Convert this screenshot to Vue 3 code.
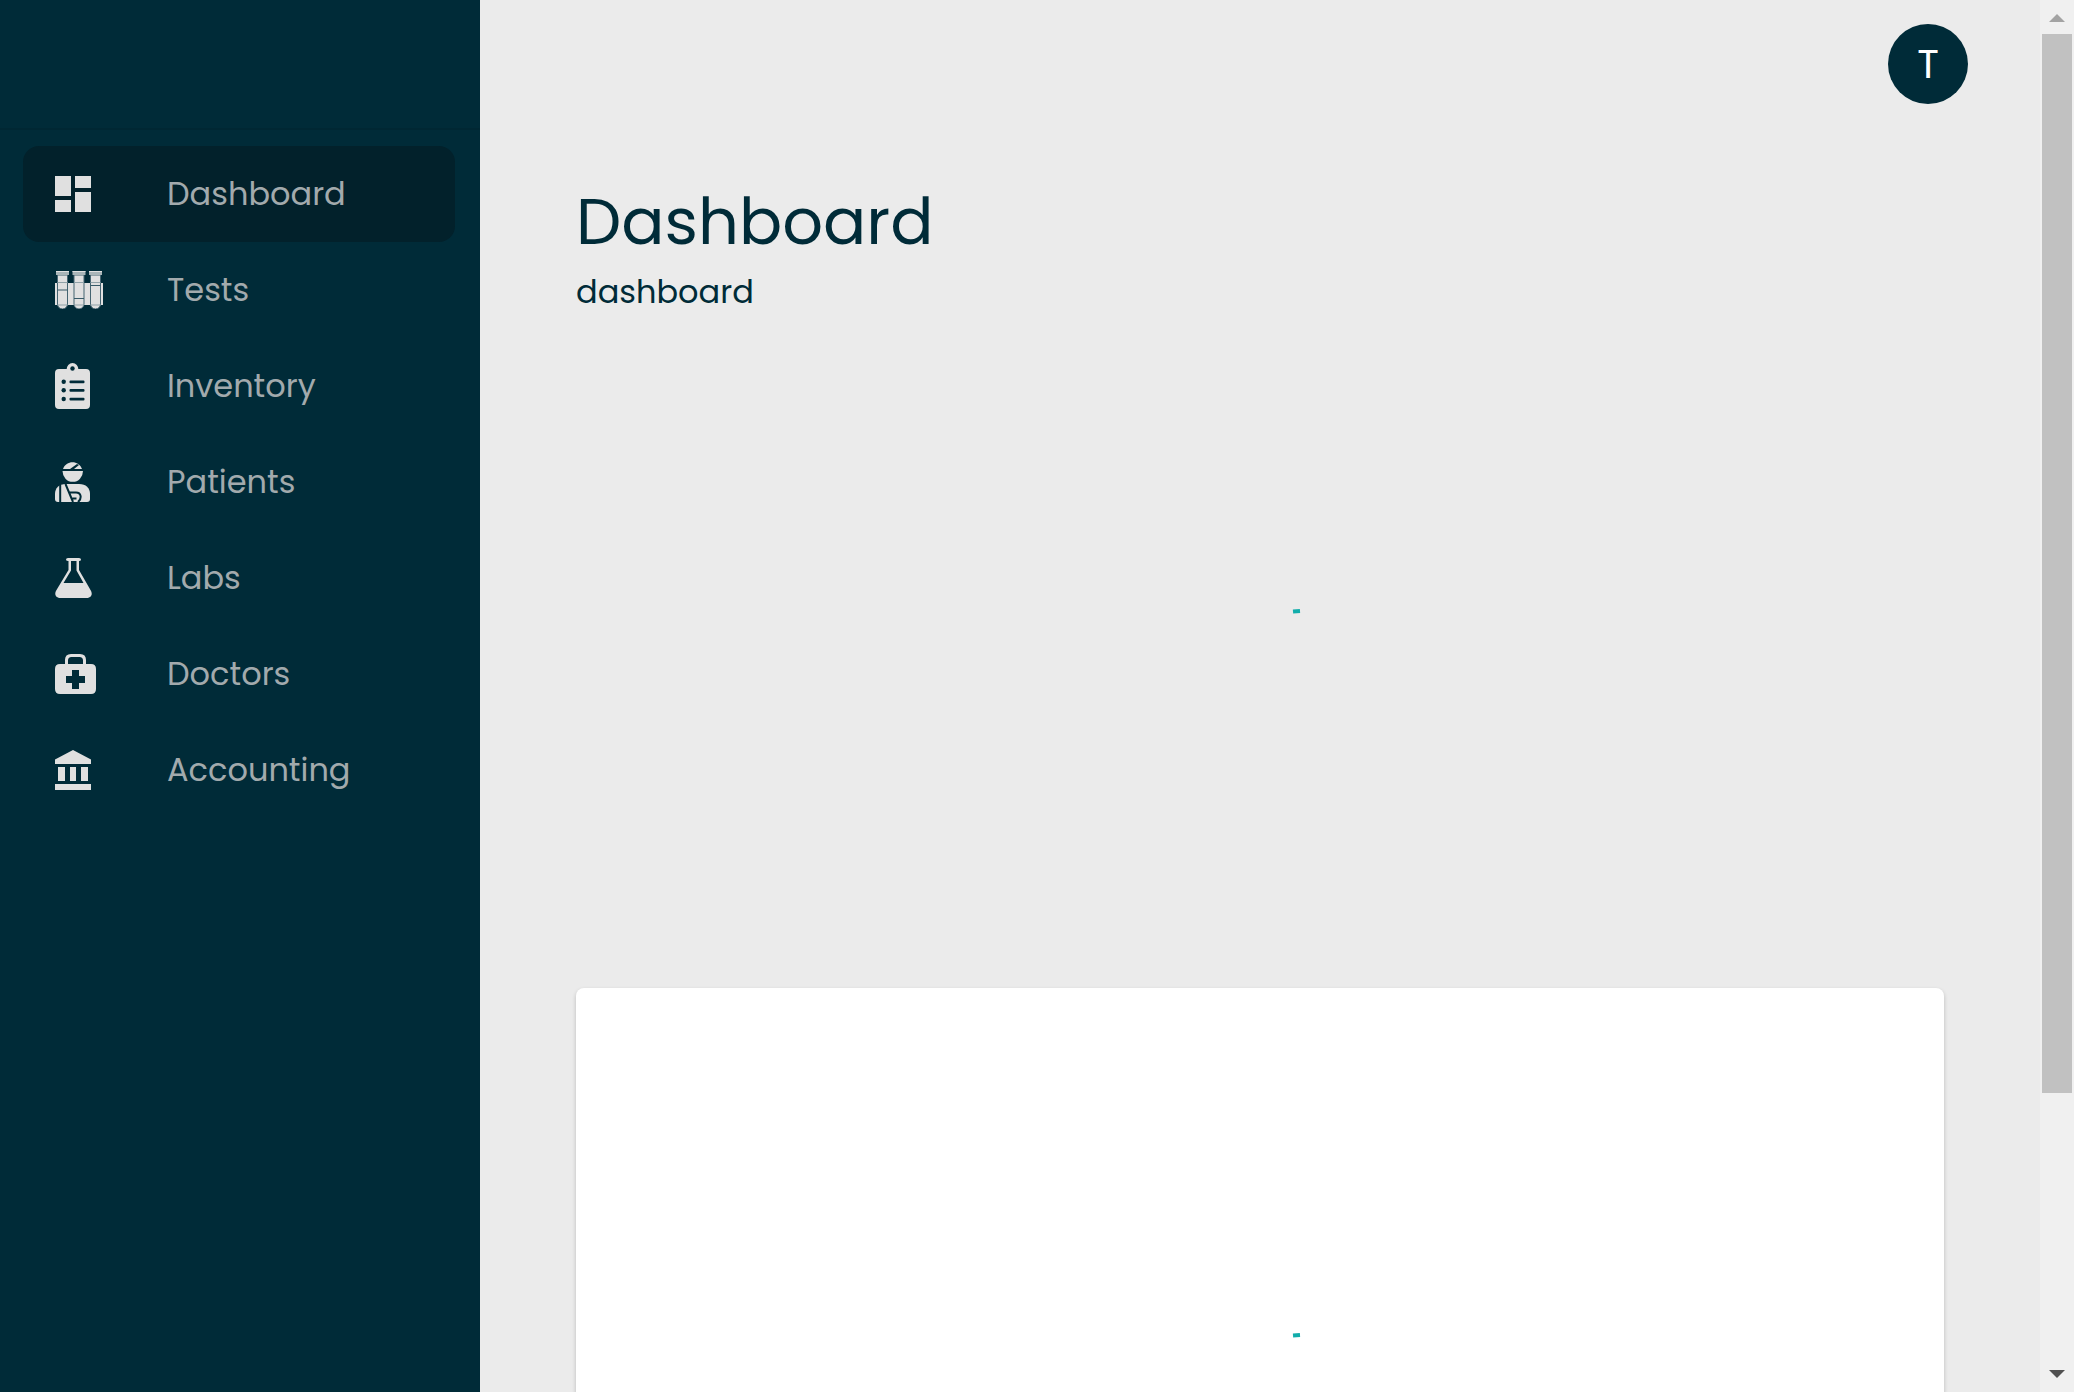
<script setup>
const items = [
  { label: 'Dashboard', icon: 'dashboard', width: 36, height: 36, active: true },
  { label: 'Tests', icon: 'tests', width: 48, height: 38 },
  { label: 'Inventory', icon: 'inventory', width: 35, height: 46 },
  { label: 'Patients', icon: 'patients', width: 35, height: 40 },
  { label: 'Labs', icon: 'labs', width: 37, height: 40 },
  { label: 'Doctors', icon: 'doctors', width: 41, height: 40 },
  { label: 'Accounting', icon: 'accounting', width: 36, height: 40 }
]
</script>

<template>
  <div class="app">
    <aside class="sidebar">
      <div class="brand"></div>
      <nav class="nav">
        <a v-for="item in items" :key="item.label" href="#" class="nav-item" :class="{ active: item.active }">
          <span class="nav-icon">
            <svg :width="item.width" :height="item.height" :viewBox="`0 0 ${item.width} ${item.height}`" fill="currentColor" aria-hidden="true">
              <path v-if="item.icon === 'dashboard'" d="M0 0h16v20H0zM0 24h16v12H0zM20 0h16v12H20zM20 16h16v20H20z" />
              <g v-else-if="item.icon === 'tests'">
                <path d="M0 12h48v22H0z" />
                <g v-for="(x, i) in [7.5, 24, 40.5]" :key="x" :transform="`translate(${x} 0)`">
                  <path d="M-5 4H5v29a5 5 0 0 1-10 0z" stroke="#456471" stroke-width="1" />
                  <path d="M-6.500 0h13v4h-13z" fill="#a9b5b8" />
                  <path d="M-6.500 0h13v1h-13z" />
                  <path d="M-5 11.500H5M-5 34H5" stroke="#91a2a8" stroke-width="1" />
                  <path :d="`M-5 ${[19, 27.5, 14.5][i]}H5`" stroke="#365967" stroke-width="1" />
                </g>
              </g>
              <g v-else-if="item.icon === 'inventory'">
                <path d="M4 6h8a5.700 5.700 0 0 1 11 0h8a4 4 0 0 1 4 4v32a4 4 0 0 1-4 4H4a4 4 0 0 1-4-4V10a4 4 0 0 1 4-4z" />
                <path d="M11.500 7a6 7 0 0 1 12 0z" />
                <g class="cut">
                  <circle cx="17.500" cy="5.500" r="2.200" />
                  <circle cx="8.700" cy="18.700" r="2.200" /><circle cx="8.700" cy="27.300" r="2.200" /><circle cx="8.700" cy="36" r="2.200" />
                  <rect x="14.500" y="17.500" width="15" height="2.700" rx="1" /><rect x="14.500" y="26" width="15" height="2.700" rx="1" /><rect x="14.500" y="34.700" width="15" height="2.700" rx="1" />
                </g>
              </g>
              <g v-else-if="item.icon === 'patients'">
                <path d="M8 7C11-2 24-2 27 7H19l5-4-2-1-7 5z" />
                <path d="M7.500 9h20.500a10.200 10.800 0 0 1-20.500 0z" />
                <path d="M11 22h13c7 0 11 4 11 10v5q0 3-3 3H3q-3 0-3-3v-5c0-6 4-10 11-10z" />
                <path class="cut-line" d="M5.200 23v17M10.500 22l7.500 18M14 30.500h7c5.500 0 6 6 2 9.500M17.500 36.500h4" />
              </g>
              <g v-else-if="item.icon === 'labs'">
                <path d="M13 0h11q2 0 2 1.500T24 3v9l11.500 20c3 5 0 8-4 8h-26c-4 0-7-3-4-8L13.500 12V3Q11 3 11 1.500T13 0zM16 3v9.500L8.500 25h20L21.500 12.500V3z" fill-rule="evenodd" />
              </g>
              <g v-else-if="item.icon === 'doctors'">
                <path d="M5 10h5V6q0-6 6-6h9q6 0 6 6v4h5q5 0 5 5v20q0 5-5 5H5q-5 0-5-5V15q0-5 5-5zm8 0h15V6.500Q28 3 24.500 3h-8Q13 3 13 6.500zM17 16v6h-6v7h6v6h7v-6h6v-7h-6v-6z" fill-rule="evenodd" />
              </g>
              <path v-else d="M18 0l18 9.500V14H0V9.500zM3 17h7v14H3zM15 17h6v14h-6zM26 17h7v14h-7zM0 34h36v6H0z" />
            </svg>
          </span>
          <span>{{ item.label }}</span>
        </a>
      </nav>
    </aside>

    <main class="content">
      <header class="topbar">
        <button class="avatar" type="button">T</button>
      </header>
      <h1>Dashboard</h1>
      <p class="subtitle">dashboard</p>
      <section class="loading">
        <svg class="spinner" viewBox="0 0 80 80" role="progressbar" aria-label="Loading"><path d="M37 3.500L44 3" /></svg>
      </section>
      <section class="card loading">
        <svg class="spinner" viewBox="0 0 80 80" role="progressbar" aria-label="Loading"><path d="M37 3.500L44 3" /></svg>
      </section>
    </main>

    <div class="scrollbar" aria-hidden="true">
      <svg class="arrow" viewBox="0 0 34 34"><path d="M17 14l8 8H9z" fill="#a3a3a3" /></svg>
      <div class="track"><div class="thumb"></div></div>
      <svg class="arrow" viewBox="0 0 34 34"><path d="M9 12h16l-8 8z" fill="#505050" /></svg>
    </div>
  </div>
</template>

<style>
body {
  margin: 0;
  background: #ebebeb;
}
</style>

<style scoped>
.app {
  display: flex;
  height: 100vh;
  overflow: hidden;
  background: #ebebeb;
  color: #002b38;
  font-family: Poppins, Inter, sans-serif;
  font-size: 32px;
}
.sidebar {
  flex: 0 0 480px;
  background: #002b38;
}
.brand {
  height: 128px;
  border-bottom: 2px solid #002733;
}
.nav {
  padding: 16px 25px 16px 23px;
}
.nav-item {
  display: flex;
  align-items: center;
  height: 96px;
  padding: 0 32px;
  box-sizing: border-box;
  border-radius: 16px;
  color: #a2aaad;
  text-decoration: none;
}
.nav-item.active {
  background: #02212b;
}
.nav-icon {
  display: flex;
  flex: 0 0 112px;
  color: #e0e0e0;
}
.cut {
  fill: #002b38;
}
.cut-line {
  fill: none;
  stroke: #002b38;
  stroke-width: 2;
}
.content {
  display: flex;
  flex: 1;
  flex-direction: column;
  min-width: 0;
  padding: 0 96px;
}
.topbar {
  display: flex;
  flex: 0 0 128px;
  align-items: center;
  justify-content: flex-end;
  margin-right: -24px;
}
.avatar {
  width: 80px;
  height: 80px;
  padding: 0;
  border: 0;
  border-radius: 50%;
  background: #002b38;
  color: #fff;
  font-family: inherit;
  font-size: 40px;
}
h1 {
  margin: 48px 0 0;
  font-size: 64px;
  font-weight: 400;
  line-height: 92px;
}
.subtitle {
  margin: 0;
  line-height: 48px;
}
.loading {
  display: flex;
  flex: 0 0 664px;
  align-items: center;
  justify-content: center;
  margin-bottom: 8px;
  padding-left: 72px;
}
.card {
  flex-basis: 768px;
  border-radius: 8px;
  background: #fff;
  box-shadow: 0 2px 4px rgba(0, 0, 0, 0.2);
}
.spinner {
  width: 80px;
  height: 80px;
  fill: none;
  stroke: #12adab;
  stroke-width: 4;
}
.scrollbar {
  display: flex;
  flex: 0 0 34px;
  flex-direction: column;
  background: #f0f0f0;
}
.arrow {
  flex: 0 0 34px;
}
.track {
  flex: 1;
  padding: 0 2px;
}
.thumb {
  height: 80%;
  background: #c1c1c1;
}
</style>
